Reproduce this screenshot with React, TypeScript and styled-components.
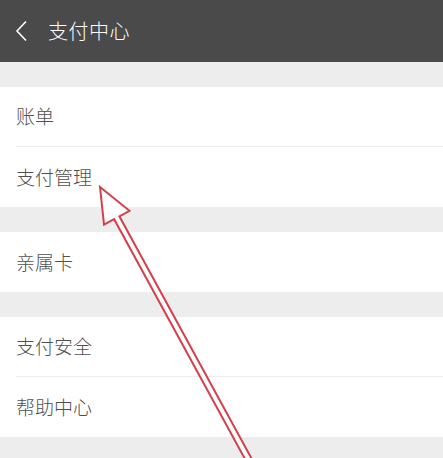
import React from "react";
import styled, { createGlobalStyle } from "styled-components";

const Global = createGlobalStyle`
  html, body {
    margin: 0;
    padding: 0;
    background: #ededed;
  }
  body {
    font-family: "Noto Sans CJK SC", "Noto Sans", sans-serif;
  }
`;

const Page = styled.div`
  position: relative;
  width: 443px;
  height: 458px;
  overflow: hidden;
  background: #ededed;
`;

const Header = styled.header`
  height: 62px;
  background: #4a4a4a;
  display: flex;
  align-items: center;
  padding-left: 15px;
  gap: 19px;
  color: #fff;
`;

const Title = styled.div`
  font-size: 20px;
  font-weight: 300;
  letter-spacing: 0.5px;
  line-height: 1;
`;

const Section = styled.section`
  background: #fff;
  margin-top: 25px;
  padding-left: 16px;
`;

const Row = styled.div<{ $divider?: boolean }>`
  height: 60px;
  display: flex;
  align-items: center;
  font-size: 19px;
  font-weight: 300;
  color: #505050;
  padding-right: 13px;
  border-bottom: ${(p) => (p.$divider ? "1px solid #ececec" : "none")};
  box-sizing: border-box;
`;

const Label = styled.span`
  margin-top: -2px;
`;

const Arrow = styled.svg`
  position: absolute;
  left: 0;
  top: 0;
`;

const sections = [["账单", "支付管理"], ["亲属卡"], ["支付安全", "帮助中心"]];

function Annotation() {
  const tip = [100, 187];
  const d = [0.479, 0.878];
  const n = [0.878, -0.479];
  const head = 35;
  const wing = 14.5;
  const shaft = 3;
  const base = [tip[0] + head * d[0], tip[1] + head * d[1]];
  const t = 330;
  const end = [tip[0] + t * d[0], tip[1] + t * d[1]];
  const p = (c: number[], k: number) => `${c[0] + k * n[0]},${c[1] + k * n[1]}`;
  const points = [
    `${tip[0]},${tip[1]}`,
    p(base, wing),
    p(base, shaft),
    p(end, shaft),
    p(end, -shaft),
    p(base, -shaft),
    p(base, -wing),
  ].join(" ");
  return (
    <Arrow width="443" height="458" viewBox="0 0 443 458">
      <polygon
        points={points}
        fill="#fff"
        fillOpacity="0.85"
        stroke="#d4404c"
        strokeWidth="2"
        strokeLinejoin="miter"
      />
    </Arrow>
  );
}

export default function App() {
  return (
    <>
      <Global />
      <Page>
        <Header>
          <svg width="14" height="22" viewBox="0 0 14 22">
            <path d="M11 1.5 L2 11 L11 20.5" fill="none" stroke="#fff" strokeWidth="1.6" />
          </svg>
          <Title>支付中心</Title>
        </Header>
        {sections.map((items, i) => (
          <Section key={i}>
            {items.map((label, j) => (
              <Row key={label} $divider={j < items.length - 1}>
                <Label>{label}</Label>
              </Row>
            ))}
          </Section>
        ))}
        <Annotation />
      </Page>
    </>
  );
}
